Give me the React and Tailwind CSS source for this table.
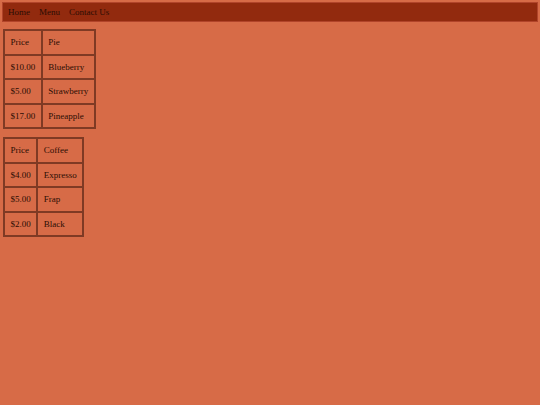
import React from "react";

const menus = [
  { title: "Pie", rows: [["$10.00", "Blueberry"], ["$5.00", "Strawberry"], ["$17.00", "Pineapple"]] },
  { title: "Coffee", rows: [["$4.00", "Expresso"], ["$5.00", "Frap"], ["$2.00", "Black"]] },
];

const Cell = ({ children }) => (
  <td className="border-2 border-[#7f3a24] px-[5.5px] py-[6px] leading-[10.5px] whitespace-nowrap">{children}</td>
);

export default function App() {
  return (
    <div className="min-h-[405px] bg-[#d76b47] p-[3px] text-[9px] text-[#2b0d04] font-['Liberation_Serif',serif]">
      <nav className="flex items-center h-[18px] bg-[#922a0e] pl-[5px] pt-[1px] gap-[9px] shadow-[0_0_0_1px_#b1442a]">
        <span>Home</span>
        <span>Menu</span>
        <span>Contact Us</span>
      </nav>
      <div className="flex flex-col items-start gap-[8px] mt-[8px]">
        {menus.map((m) => (
          <table key={m.title} className="border-collapse border-2 border-[#7f3a24]">
            <tbody>
              <tr>
                <Cell>Price</Cell>
                <Cell>{m.title}</Cell>
              </tr>
              {m.rows.map(([price, name]) => (
                <tr key={name}>
                  <Cell>{price}</Cell>
                  <Cell>{name}</Cell>
                </tr>
              ))}
            </tbody>
          </table>
        ))}
      </div>
    </div>
  );
}
